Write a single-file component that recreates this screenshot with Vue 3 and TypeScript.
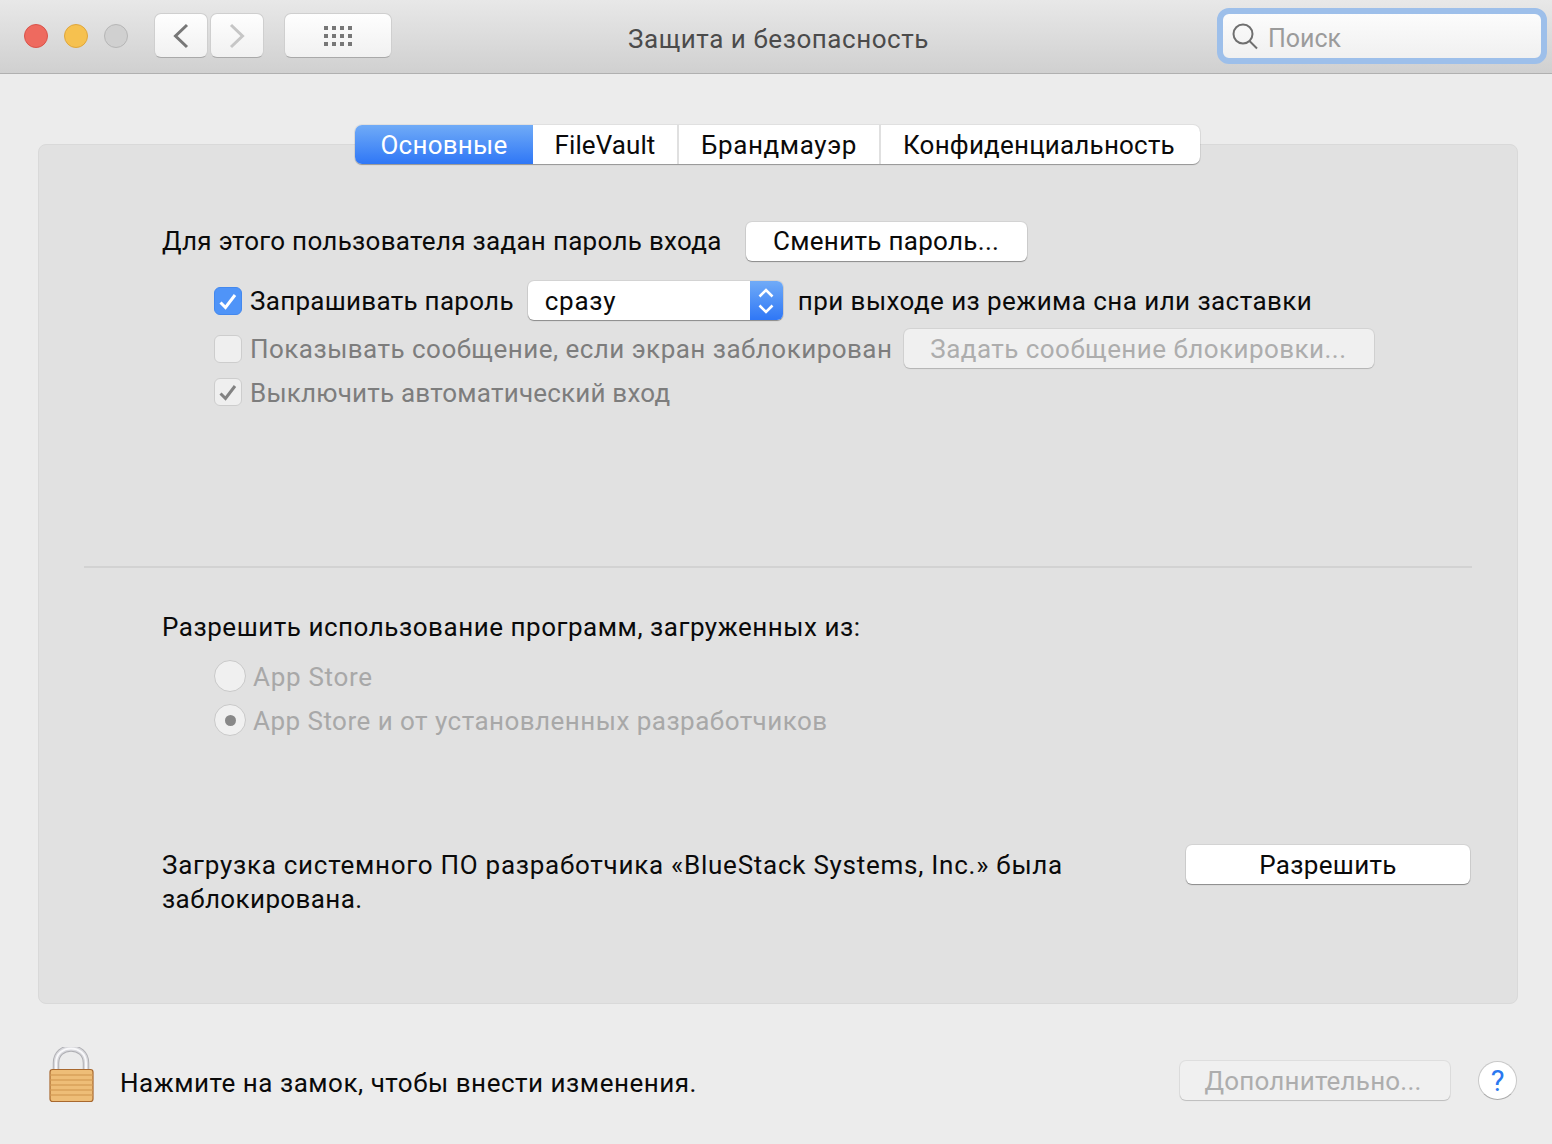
<script setup lang="ts">
const tabs: string[] = ['FileVault', 'Брандмауэр', 'Конфиденциальность']
const lockLines: number[] = [5, 10, 15, 20, 25]
const gridDots: number[] = Array.from({ length: 12 }, (_, i) => i)
</script>

<template>
  <div class="window">
    <header class="titlebar">
      <div class="lights">
        <span class="light red"></span>
        <span class="light yellow"></span>
        <span class="light gray"></span>
      </div>
      <div class="nav">
        <button class="tool nav-btn">
          <svg width="18" height="26" viewBox="0 0 18 26"><path d="M15 2 L3.500 13 L15 24" fill="none" stroke="#777" stroke-width="3"/></svg>
        </button>
        <button class="tool nav-btn">
          <svg width="18" height="26" viewBox="0 0 18 26"><path d="M3 2 L14.500 13 L3 24" fill="none" stroke="#c6c6c6" stroke-width="3"/></svg>
        </button>
      </div>
      <button class="tool grid-btn">
        <span class="dots"><i v-for="d in gridDots" :key="d"></i></span>
      </button>
      <div class="title">Защита и безопасность</div>
      <div class="search">
        <svg width="28" height="28" viewBox="0 0 28 28"><circle cx="12" cy="12" r="9.500" fill="none" stroke="#6f6f6f" stroke-width="2"/><path d="M18.500 19 L26 26.500" stroke="#6f6f6f" stroke-width="2" fill="none"/></svg>
        <span>Поиск</span>
      </div>
    </header>

    <main class="content">
      <nav class="tabs">
        <span class="tab active">Основные</span>
        <span v-for="t in tabs" :key="t" class="tab">{{ t }}</span>
      </nav>

      <section class="panel">
        <div class="row pass-row">
          <span class="pass-text ls-29">Для этого пользователя задан пароль входа</span>
          <button class="btn change">Сменить пароль...</button>
        </div>

        <div class="options">
          <div class="row ask-row">
            <span class="check on">
              <svg width="20" height="20" viewBox="0 0 20 20"><path d="M2.500 11.500 L7.500 16.500 L17 4" fill="none" stroke="#fff" stroke-width="3"/></svg>
            </span>
            <span class="label ls-28">Запрашивать пароль</span>
            <div class="select">
              <span class="select-text">сразу</span>
              <span class="select-arrows">
                <svg width="18" height="28" viewBox="0 0 18 28"><path d="M2.500 9.500 L9 3 L15.500 9.500 M2.500 18.500 L9 25 L15.500 18.500" fill="none" stroke="#fff" stroke-width="2.600"/></svg>
              </span>
            </div>
            <span class="ls-43">при выходе из режима сна или заставки</span>
          </div>
          <div class="row msg-row muted">
            <span class="check"></span>
            <span class="label ls-47">Показывать сообщение, если экран заблокирован</span>
            <button class="btn disabled lock-msg">Задать сообщение блокировки...</button>
          </div>
          <div class="row auto-row muted">
            <span class="check">
              <svg width="20" height="20" viewBox="0 0 20 20"><path d="M2.500 11.500 L7.500 16.500 L17 4" fill="none" stroke="#828282" stroke-width="3"/></svg>
            </span>
            <span class="label nudge ls-20">Выключить автоматический вход</span>
          </div>
        </div>

        <hr class="divider" />

        <div class="allow-title">Разрешить использование программ, загруженных из:</div>
        <div class="row radio-row faint first">
          <span class="radio"></span>
          <span class="nudge ls-70">App Store</span>
        </div>
        <div class="row radio-row faint">
          <span class="radio selected"></span>
          <span class="nudge ls-47">App Store и от установленных разработчиков</span>
        </div>

        <div class="blocked">
          <p>
            <span class="line-a">Загрузка системного ПО разработчика «BlueStack Systems, Inc.» была</span>
            <span class="line-b">заблокирована.</span>
          </p>
          <button class="btn allow">Разрешить</button>
        </div>
      </section>

      <footer class="footer">
        <svg class="lock" width="46" height="56" viewBox="0 0 46 56">
          <path d="M7 23 V16 C7 -3.500 37 -3.500 37 16 V23" fill="none" stroke="#b0b0b4" stroke-width="6.500"/>
          <path d="M7 23 V16 C7 -3.500 37 -3.500 37 16 V23" fill="none" stroke="#d8d8dc" stroke-width="4.500"/>
          <path d="M7 23 V16 C7 -3.500 37 -3.500 37 16 V23" fill="none" stroke="#f8f8fa" stroke-width="2"/>
          <rect x="1" y="22.500" width="43" height="32" rx="2.500" fill="#eebd77" stroke="#a8682e" stroke-width="1.200"/>
          <path v-for="y in lockLines" :key="y" :d="`M1.500 ${23 + y} H43.500`" stroke="#d9a25a" stroke-width="1.500"/>
        </svg>
        <span class="hint">Нажмите на замок, чтобы внести изменения.</span>
        <button class="btn disabled extra">Дополнительно...</button>
        <button class="help">?</button>
      </footer>
    </main>
  </div>
</template>

<style>
html, body { margin: 0; background: #ececec; }
</style>

<style scoped>
.window {
  width: 1552px;
  height: 1144px;
  overflow: hidden;
  background: #ececec;
  color: #0a0a0a;
  font-family: Roboto, "Noto Sans", sans-serif;
  font-size: 26px;
  line-height: 34px;
}
.ls-20 { letter-spacing: 0.2px; }
.ls-28 { letter-spacing: 0.28px; }
.ls-29 { letter-spacing: 0.29px; }
.ls-43 { letter-spacing: 0.43px; }
.ls-47 { letter-spacing: 0.47px; }
.ls-70 { letter-spacing: 0.7px; }
.nudge { margin-top: 2px; }
.titlebar {
  box-sizing: border-box;
  height: 74px;
  display: flex;
  align-items: flex-start;
  position: relative;
  padding: 13px 0 0 24px;
  background: linear-gradient(#e8e8e8, #d0d0d0);
  border-bottom: 1px solid #b0b0b0;
}
.lights { display: flex; gap: 16px; margin-top: 11px; }
.light { box-sizing: border-box; width: 24px; height: 24px; border-radius: 50%; border: 1px solid; }
.red { background: #ee6a5f; border-color: #d9534a; }
.yellow { background: #f6c14f; border-color: #dfa63c; }
.gray { background: #d0d0d0; border-color: #b6b6b6; }
.tool {
  box-sizing: border-box;
  height: 45px;
  padding: 0;
  display: flex;
  align-items: center;
  justify-content: center;
  background: linear-gradient(#fefefe, #f1f1f1);
  border: 1px solid #cfcfcf;
  border-bottom-color: #a9a9a9;
  border-radius: 7px;
}
.nav { display: flex; gap: 2px; margin-left: 26px; }
.nav-btn { width: 54px; }
.grid-btn { width: 108px; margin-left: 20px; }
.dots { display: grid; grid-template-columns: repeat(4, 4px); grid-auto-rows: 4px; gap: 4px; }
.dots i { background: #777; }
.title {
  position: absolute;
  left: 5px;
  right: 0;
  top: 22px;
  text-align: center;
  color: #4b4b4b;
  letter-spacing: 0.55px;
}
.search {
  box-sizing: border-box;
  position: absolute;
  left: 1217px;
  top: 8px;
  width: 330px;
  height: 56px;
  display: flex;
  align-items: center;
  gap: 9px;
  padding-left: 13px;
  background: linear-gradient(#fcfcfc, #f0f0f0);
  border: 6px solid #9dbfea;
  border-radius: 12px;
  color: #9b9b9b;
  font-size: 25px;
}
.search svg { margin-left: -5px; }
.search span { margin-top: 5px; }
.content {
  position: relative;
  height: 1070px;
  display: flex;
  flex-direction: column;
}
.tabs {
  position: relative;
  z-index: 1;
  align-self: flex-start;
  display: flex;
  height: 39px;
  margin: 51px 0 -20px 355px;
  background: #fff;
  border-radius: 7px;
  box-shadow: 0 1px 1px rgba(0, 0, 0, .3), 0 0 0 1px rgba(0, 0, 0, .05);
}
.tab {
  box-sizing: border-box;
  line-height: 41px;
  text-align: center;
  color: #0a0a0a;
  border-left: 2px solid #e0e0e0;
}
.tab:nth-child(2) { width: 144px; letter-spacing: 0.1px; border-left: 0; }
.tab:nth-child(3) { width: 202px; letter-spacing: 0.6px; }
.tab:nth-child(4) { width: 321px; padding-right: 3px; letter-spacing: 0.2px; }
.tab.active {
  width: 178px;
  letter-spacing: 0.25px;
  color: #fff;
  border: 0;
  border-radius: 7px 0 0 7px;
  background: linear-gradient(#70abf7, #2f77f6);
}
.panel {
  box-sizing: border-box;
  width: 1480px;
  height: 860px;
  margin-left: 38px;
  padding: 77px 45px 0;
  background: #e1e1e1;
  border: 1px solid #d9d9d9;
  border-radius: 8px;
}
.row { display: flex; align-items: center; }
.pass-row { margin-left: 78px; height: 39px; gap: 24px; }
.pass-text { margin-bottom: 2px; }
.btn {
  box-sizing: border-box;
  height: 39px;
  padding: 0;
  font: inherit;
  color: #0a0a0a;
  background: #fff;
  border: 0;
  border-radius: 6px;
  box-shadow: 0 1px 1px rgba(0, 0, 0, .35), 0 0 0 1px rgba(0, 0, 0, .06);
}
.btn.disabled {
  color: #adadad;
  background: #f0f0f0;
  box-shadow: 0 1px 1px rgba(0, 0, 0, .15), 0 0 0 1px rgba(0, 0, 0, .06);
}
.change { width: 281px; letter-spacing: 0.3px; padding-bottom: 2px; }
.options { margin-left: 130px; }
.ask-row { height: 39px; margin-top: 20px; }
.msg-row { height: 39px; margin-top: 9px; }
.auto-row { height: 34px; margin-top: 7px; }
.muted { color: #7d7d7d; }
.faint { color: #a8a8a8; }
.check {
  box-sizing: border-box;
  width: 28px;
  height: 28px;
  margin-right: 8px;
  flex: none;
  display: flex;
  align-items: center;
  justify-content: center;
  background: #efefef;
  border: 1px solid #cdcdcd;
  border-radius: 6px;
}
.check.on { background: #4f94f8; border-color: #4388ee; }
.select {
  box-sizing: border-box;
  width: 255px;
  height: 39px;
  margin: 0 15px 0 14px;
  display: flex;
  justify-content: space-between;
  background: #fff;
  border-radius: 6px;
  overflow: hidden;
  box-shadow: 0 1px 1px rgba(0, 0, 0, .35), 0 0 0 1px rgba(0, 0, 0, .06);
}
.select-text { padding-left: 17px; line-height: 41px; letter-spacing: 0.7px; }
.select-arrows {
  width: 33px;
  display: flex;
  align-items: center;
  justify-content: center;
  background: linear-gradient(#70abf7, #2f77f6);
}
.lock-msg { width: 470px; margin-left: 12px; padding-right: 2px; letter-spacing: 0.45px; }
.divider {
  height: 0;
  margin: 157px 0 0;
  border: 0;
  border-top: 2px solid #d2d2d2;
}
.allow-title { margin: 42px 0 0 78px; letter-spacing: 0.53px; }
.radio-row { margin-left: 130px; height: 34px; }
.radio-row.first { margin-top: 15px; }
.radio-row:not(.first) { margin-top: 10px; }
.radio {
  box-sizing: border-box;
  width: 32px;
  height: 32px;
  margin-right: 7px;
  display: flex;
  align-items: center;
  justify-content: center;
  background: #f0f0f0;
  border: 1px solid #c9c9c9;
  border-radius: 50%;
}
.radio.selected::after {
  content: "";
  width: 11px;
  height: 11px;
  border-radius: 50%;
  background: #888;
}
.blocked {
  display: flex;
  justify-content: space-between;
  align-items: flex-start;
  margin: 108px 2px 0 78px;
}
.blocked p { margin: 3px 0 0; }
.line-a { display: block; letter-spacing: 0.74px; }
.line-b { display: block; letter-spacing: 0.39px; }
.allow { width: 284px; letter-spacing: 0.33px; }
.footer {
  position: relative;
  display: flex;
  align-items: center;
  height: 56px;
  margin-top: 43px;
  padding-left: 49px;
}
.hint { margin-left: 25px; margin-top: 16px; letter-spacing: 0.52px; }
.extra { width: 270px; margin-left: auto; margin-top: 11px; padding-right: 4px; letter-spacing: 0.2px; }
.help {
  box-sizing: border-box;
  width: 39px;
  height: 39px;
  margin: 11px 35px 0 28px;
  padding: 0;
  font: inherit;
  font-size: 29px;
  color: #2a78f0;
  background: #fff;
  border: 1px solid #c8c8c8;
  border-bottom-color: #aaa;
  border-radius: 50%;
}
</style>
